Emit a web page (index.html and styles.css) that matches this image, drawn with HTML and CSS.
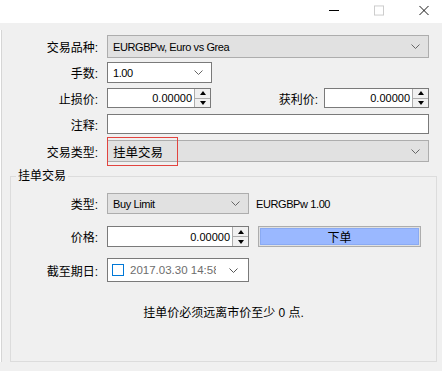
FILE: index.html
```html
<!DOCTYPE html>
<html lang="zh">
<head>
    <meta charset="UTF-8">
    <title>新订单</title>
    <link rel="stylesheet" href="styles.css">
</head>
<body>
    <!-- Window title bar -->
    <div class="titlebar">
        <span class="tb-btn">
            <svg width="10" height="10" viewBox="0 0 10 10"><line x1="0" y1="5.5" x2="10" y2="5.5" stroke="#000" stroke-width="1"/></svg>
        </span>
        <span class="tb-btn">
            <svg width="11" height="11" viewBox="0 0 11 11"><rect x="0.5" y="0.5" width="10" height="10" fill="none" stroke="#c8c8c8"/></svg>
        </span>
        <span class="tb-btn">
            <svg width="11" height="11" viewBox="0 0 11 11"><path d="M0.5 0.5 L10.5 10.5 M10.5 0.5 L0.5 10.5" stroke="#000" stroke-width="1"/></svg>
        </span>
    </div>

    <div class="window">
        <div class="panel">
            <div class="row row-1">
                <label class="lbl">交易品种:</label>
                <div class="select select-gray wide">
                    <span class="select-text">EURGBPw, Euro vs Grea</span>
                    <svg class="chev" width="9" height="5" viewBox="0 0 9 5"><polyline points="0.5,0.5 4.5,4.5 8.5,0.5" fill="none" stroke="#666"/></svg>
                </div>
            </div>

            <div class="row row-2">
                <label class="lbl">手数:</label>
                <div class="select select-white lots">
                    <span class="select-text">1.00</span>
                    <svg class="chev" width="9" height="5" viewBox="0 0 9 5"><polyline points="0.5,0.5 4.5,4.5 8.5,0.5" fill="none" stroke="#666"/></svg>
                </div>
            </div>

            <div class="row row-3">
                <label class="lbl">止损价:</label>
                <div class="spin sl">
                    <span class="spin-val">0.00000</span>
                    <span class="spin-btns"><span class="arr up"></span><span class="arr down"></span></span>
                </div>
                <label class="lbl-inline">获利价:</label>
                <div class="spin tp">
                    <span class="spin-val">0.00000</span>
                    <span class="spin-btns"><span class="arr up"></span><span class="arr down"></span></span>
                </div>
            </div>

            <div class="row row-4">
                <label class="lbl">注释:</label>
                <div class="text-input wide"></div>
            </div>

            <div class="row row-5">
                <label class="lbl">交易类型:</label>
                <div class="select select-gray wide">
                    <span class="select-text cjk-big">挂单交易</span>
                    <svg class="chev" width="9" height="5" viewBox="0 0 9 5"><polyline points="0.5,0.5 4.5,4.5 8.5,0.5" fill="none" stroke="#666"/></svg>
                </div>
                <div class="highlight"></div>
            </div>

            <fieldset class="group">
                <legend>挂单交易</legend>

                <div class="grow grow-1">
                    <label class="glbl">类型:</label>
                    <div class="select select-gray narrow">
                        <span class="select-text">Buy Limit</span>
                        <svg class="chev" width="9" height="5" viewBox="0 0 9 5"><polyline points="0.5,0.5 4.5,4.5 8.5,0.5" fill="none" stroke="#666"/></svg>
                    </div>
                    <span class="info">EURGBPw 1.00</span>
                </div>

                <div class="grow grow-2">
                    <label class="glbl">价格:</label>
                    <div class="spin narrow">
                        <span class="spin-val">0.00000</span>
                        <span class="spin-btns"><span class="arr up"></span><span class="arr down"></span></span>
                    </div>
                    <button class="order-btn" type="button"><span class="order-inner">下单</span></button>
                </div>

                <div class="grow grow-3">
                    <label class="glbl">截至期日:</label>
                    <div class="datepick narrow">
                        <span class="check"></span>
                        <span class="date-text">2017.03.30 14:58</span>
                        <svg class="chev" width="9" height="5" viewBox="0 0 9 5"><polyline points="0.5,0.5 4.5,4.5 8.5,0.5" fill="none" stroke="#555"/></svg>
                    </div>
                </div>

                <p class="message">挂单价必须远离市价至少 0 点.</p>
            </fieldset>
        </div>
    </div>
</body>
</html>
```

FILE: styles.css
```css
/* Basic page */
body {
    margin: 0;
    width: 442px;
    height: 371px;
    overflow: hidden;
    background-color: #f0f0f0;
    font-family: "Liberation Sans", "Noto Sans CJK SC", sans-serif;
    font-size: 11px;
    color: #000;
}

/* Title bar */
.titlebar {
    height: 23px;
    background-color: #fff;
    display: flex;
    justify-content: flex-end;
    align-items: flex-start;
    padding-right: 13px;
}

.tb-btn {
    display: flex;
    justify-content: center;
    width: 10px;
    margin-left: 35px;
    padding-top: 5px;
}

/* Window body */
.window {
    padding-top: 7px;
}

.panel {
    box-shadow: inset 1px 0 0 #fff, inset 2px 0 0 #d6d6d6;
    padding-top: 5px;
}

/* Rows of the top form */
.row {
    position: relative;
    display: flex;
    align-items: center;
    padding-right: 13px;
}

.row-1 { height: 23px; margin-bottom: 4px; }
.row-2 { height: 21px; margin-bottom: 5px; }
.row-3 { height: 20px; margin-bottom: 6px; }
.row-4 { height: 20px; margin-bottom: 6px; }
.row-5 { height: 22px; }

.lbl {
    width: 98px;
    margin-right: 9px;
    text-align: right;
    font-size: 12px;
    flex-shrink: 0;
}

.lbl-inline {
    margin-left: auto;
    margin-right: 6px;
    font-size: 12px;
}

/* Combo boxes */
.select {
    height: 100%;
    box-sizing: border-box;
    display: flex;
    align-items: center;
    justify-content: space-between;
    padding: 0 8px 0 5px;
}

.select-gray {
    background-color: #e1e1e1;
    border: 1px solid #adadad;
}

.select-white {
    background-color: #fff;
    border: 1px solid #7a7a7a;
}

.select-text {
    white-space: nowrap;
    letter-spacing: -0.4px;
}

.cjk-big {
    font-size: 12.5px;
    letter-spacing: 0;
}

.wide { flex: 1; }
.lots { width: 105px; }
.narrow { width: 142px; flex-shrink: 0; }

/* Spin boxes */
.spin {
    height: 100%;
    box-sizing: border-box;
    display: flex;
    background-color: #fff;
    border: 1px solid #7a7a7a;
}

.sl { width: 104px; }
.tp { width: 105px; }

.spin-val {
    flex: 1;
    text-align: right;
    padding-right: 2px;
    display: flex;
    align-items: center;
    justify-content: flex-end;
}

.spin-btns {
    width: 15px;
    display: flex;
    flex-direction: column;
    background-color: #f0f0f0;
    border-left: 1px solid #adadad;
}

.arr {
    flex: 1;
    display: flex;
    align-items: center;
    justify-content: center;
}

.arr.up {
    border-bottom: 1px solid #adadad;
}

.arr.up::after {
    content: "";
    border-left: 3px solid transparent;
    border-right: 3px solid transparent;
    border-bottom: 4px solid #000;
}

.arr.down::after {
    content: "";
    border-left: 3px solid transparent;
    border-right: 3px solid transparent;
    border-top: 4px solid #000;
}

/* Comment field */
.text-input {
    height: 100%;
    box-sizing: border-box;
    background-color: #fff;
    border: 1px solid #7a7a7a;
}

/* Red focus frame over the order type */
.highlight {
    position: absolute;
    left: 107px;
    top: -3px;
    width: 71px;
    height: 29px;
    box-sizing: border-box;
    border: 1px solid #e2443f;
}

/* Pending order group */
.group {
    margin: 6px 5px 0 10px;
    padding: 0 0 40px 0;
    border: 1px solid #dcdcdc;
}

.group legend {
    margin-left: 5px;
    padding: 0 2px;
    font-size: 12px;
    line-height: 16px;
}

.grow {
    display: flex;
    align-items: center;
}

.grow-1 { height: 21px; margin-top: 9px; }
.grow-2 { height: 21px; margin-top: 12px; }
.grow-3 { height: 24px; margin-top: 11px; }

.glbl {
    width: 87px;
    margin-right: 9px;
    text-align: right;
    font-size: 12px;
    flex-shrink: 0;
}

.info {
    margin-left: 7px;
    letter-spacing: -0.4px;
}

/* Order button */
.order-btn {
    margin-left: 9px;
    width: 163px;
    height: 21px;
    padding: 1px;
    border: 1px solid #adadad;
    background-color: #e1e1e1;
    font-family: inherit;
    display: flex;
}

.order-inner {
    flex: 1;
    display: flex;
    align-items: center;
    justify-content: center;
    background-color: #9ab8ff;
    border: 1px solid #8aaaf2;
    font-size: 12px;
    color: #000;
}

/* Date picker */
.datepick {
    height: 100%;
    box-sizing: border-box;
    background-color: #fff;
    border: 1px solid #7a7a7a;
    display: flex;
    align-items: center;
    padding: 0 10px 0 4px;
}

.check {
    width: 12px;
    height: 12px;
    box-sizing: border-box;
    border: 1px solid #0078d7;
    flex-shrink: 0;
}

.date-text {
    margin-left: 6px;
    width: 86px;
    overflow: hidden;
    white-space: nowrap;
    color: #6d6d6d;
    font-size: 11.5px;
}

.datepick .chev {
    margin-left: auto;
}

/* Bottom message */
.message {
    margin: 23px 0 0 0;
    text-align: center;
    font-size: 12px;
    line-height: 16px;
}
```
